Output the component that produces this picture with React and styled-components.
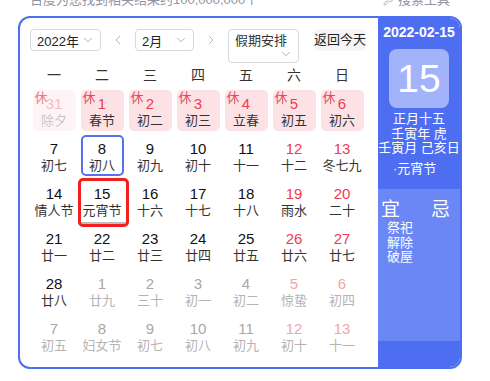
import React from 'react';
import styled, { createGlobalStyle } from 'styled-components';
import { ChevronDown, ChevronLeft, ChevronRight, Wrench } from 'lucide-react';

const GlobalStyle = createGlobalStyle`
  html, body {
    margin: 0;
    padding: 0;
    background: #ffffff;
    overflow: hidden;
  }
  body {
    font-family: "Liberation Sans", "Noto Sans CJK SC", sans-serif;
    color: #333;
  }
`;

const weekdays = ['一', '二', '三', '四', '五', '六', '日'];

// [day, lunar, flags]  flags: r = weekend red, h = holiday, o = other month, t = today, s = selected
const days = [
  [31, '除夕', 'ho'], [1, '春节', 'h'], [2, '初二', 'h'], [3, '初三', 'h'], [4, '立春', 'h'], [5, '初五', 'h'], [6, '初六', 'h'],
  [7, '初七', ''], [8, '初八', 't'], [9, '初九', ''], [10, '初十', ''], [11, '十一', ''], [12, '十二', 'r'], [13, '冬七九', 'r'],
  [14, '情人节', ''], [15, '元宵节', 's'], [16, '十六', ''], [17, '十七', ''], [18, '十八', ''], [19, '雨水', 'r'], [20, '二十', 'r'],
  [21, '廿一', ''], [22, '廿二', ''], [23, '廿三', ''], [24, '廿四', ''], [25, '廿五', ''], [26, '廿六', 'r'], [27, '廿七', 'r'],
  [28, '廿八', ''], [1, '廿九', 'o'], [2, '三十', 'o'], [3, '初一', 'o'], [4, '初二', 'o'], [5, '惊蛰', 'or'], [6, '初四', 'or'],
  [7, '初五', 'o'], [8, '妇女节', 'o'], [9, '初七', 'o'], [10, '初八', 'o'], [11, '初九', 'o'], [12, '初十', 'or'], [13, '十一', 'or'],
];

function App() {
  return (
    <Page>
      <GlobalStyle />
      <SearchMeta>
        <span>百度为您找到相关结果约100,000,000个</span>
        <Tools>
          <Wrench size={11} strokeWidth={1.6} />
          搜索工具
        </Tools>
      </SearchMeta>

      <Card>
        <Main>
          <Toolbar>
            <Select $width={71}>
              2022年
              <ChevronDown size={14} strokeWidth={1.4} color="#9aa0ac" />
            </Select>
            <Arrow>
              <ChevronLeft size={16} strokeWidth={1.4} />
            </Arrow>
            <Select $width={59}>
              2月
              <ChevronDown size={14} strokeWidth={1.4} color="#9aa0ac" />
            </Select>
            <Arrow>
              <ChevronRight size={16} strokeWidth={1.4} />
            </Arrow>
            <TallSelect>
              <span>假期安排</span>
              <ChevronDown size={14} strokeWidth={1.4} color="#9aa0ac" />
            </TallSelect>
            <TodayButton>返回今天</TodayButton>
          </Toolbar>

          <WeekRow>
            {weekdays.map((w) => (
              <span key={w}>{w}</span>
            ))}
          </WeekRow>

          <Grid>
            {days.map(([d, lunar, f], i) => (
              <Cell
                key={i}
                $holiday={f.includes('h')}
                $other={f.includes('o')}
                $today={f.includes('t')}
                $selected={f.includes('s')}
              >
                {f.includes('h') && <Rest>休</Rest>}
                <DayNum $red={f.includes('r') || f.includes('h')} $other={f.includes('o')}>
                  {d}
                </DayNum>
                <Lunar $other={f.includes('o')}>{lunar}</Lunar>
              </Cell>
            ))}
          </Grid>
        </Main>

        <Side>
          <SideTop>
            <DateLine>2022-02-15</DateLine>
            <BigDay>15</BigDay>
            <LunarInfo>
              <div>正月十五</div>
              <div>壬寅年 虎</div>
              <div>壬寅月 己亥日</div>
            </LunarInfo>
            <Festival>·元宵节</Festival>
          </SideTop>
          <SideMiddle>
            <AlmanacHead>
              <span>宜</span>
              <span>忌</span>
            </AlmanacHead>
            <AlmanacList>
              <div>祭祀</div>
              <div>解除</div>
              <div>破屋</div>
            </AlmanacList>
          </SideMiddle>
          <SideBottom />
        </Side>
      </Card>
    </Page>
  );
}

const Page = styled.div`
  width: 490px;
  height: 381px;
`;

const SearchMeta = styled.div`
  display: flex;
  justify-content: space-between;
  margin-top: -9px;
  padding: 0 40px 0 30px;
  font-size: 13px;
  line-height: 18px;
  color: #9195a3;
`;

const Tools = styled.span`
  display: flex;
  align-items: center;
  gap: 4px;
`;

const Card = styled.div`
  margin: 7px 0 0 18px;
  width: 444px;
  height: 353px;
  box-sizing: border-box;
  border: 2px solid #4e6ef2;
  border-radius: 12px;
  overflow: hidden;
  display: flex;
`;

const Main = styled.div`
  width: 358px;
  flex-shrink: 0;
  box-sizing: border-box;
  padding: 11px 12px 0 10px;
`;

const Toolbar = styled.div`
  display: flex;
  align-items: flex-start;
  height: 34px;
  & > * {
    flex-shrink: 0;
  }
`;

const Select = styled.div`
  width: ${(p) => p.$width}px;
  height: 22px;
  box-sizing: border-box;
  border: 1px solid #d7d9e0;
  border-radius: 4px;
  display: flex;
  align-items: center;
  justify-content: space-between;
  padding: 0 5px 0 6px;
  font-size: 13px;
  white-space: nowrap;
  color: #222;
`;

const Arrow = styled.div`
  width: 34px;
  height: 22px;
  display: flex;
  align-items: center;
  justify-content: center;
  color: #aab0bb;
`;

const TallSelect = styled.div`
  width: 71px;
  height: 34px;
  box-sizing: border-box;
  border: 1px solid #d7d9e0;
  border-radius: 4px;
  display: flex;
  flex-direction: column;
  padding: 2px 5px 0 6px;
  font-size: 13px;
  line-height: 18px;
  white-space: nowrap;
  color: #333;
  svg {
    align-self: flex-end;
    margin-top: -3px;
  }
`;

const TodayButton = styled.div`
  margin-left: 15px;
  width: 52px;
  height: 22px;
  border-radius: 6px;
  background: #f5f5f6;
  font-size: 13px;
  line-height: 22px;
  text-align: center;
  color: #222;
  white-space: nowrap;
`;

const WeekRow = styled.div`
  display: grid;
  grid-template-columns: repeat(7, 48px);
  margin-top: 4px;
  height: 16px;
  font-size: 14px;
  line-height: 16px;
  text-align: center;
  color: #333;
`;

const Grid = styled.div`
  display: grid;
  grid-template-columns: repeat(7, 48px);
  grid-auto-rows: 41px;
  row-gap: 4px;
  margin-top: 7px;
  justify-items: center;
`;

const Cell = styled.div`
  position: relative;
  width: 43px;
  height: 41px;
  box-sizing: border-box;
  border-radius: 5px;
  display: flex;
  flex-direction: column;
  align-items: center;
  padding-top: 3px;
  background: ${(p) => (p.$holiday ? (p.$other ? '#fef1f2' : '#fde2e5') : 'transparent')};
  border: 2px solid ${(p) => (p.$today ? '#5472ef' : 'transparent')};
  opacity: ${(p) => (p.$holiday && p.$other ? 0.75 : 1)};
  ${(p) =>
    p.$selected &&
    `
    &::after {
      content: '';
      position: absolute;
      left: -5px;
      top: -4px;
      right: -7px;
      bottom: -8px;
      border: 3px solid #f31e1e;
      border-radius: 5px;
      box-shadow: inset 0 -3px 0 -1px #bdbdbd;
    }
  `}
`;

const Rest = styled.span`
  position: absolute;
  left: 0px;
  top: -2px;
  font-size: 13px;
  line-height: 16px;
  color: #f0445a;
`;

const DayNum = styled.div`
  font-size: 15px;
  line-height: 18px;
  color: ${(p) => {
    if (p.$other) return p.$red ? '#f4a3ad' : '#a8a8a8';
    return p.$red ? '#ef3b50' : '#111';
  }};
`;

const Lunar = styled.div`
  font-size: 13px;
  line-height: 16px;
  white-space: nowrap;
  color: ${(p) => (p.$other ? '#b4b4b4' : '#333')};
`;

const Side = styled.div`
  flex: 1;
  display: flex;
  flex-direction: column;
  color: #fff;
`;

const SideTop = styled.div`
  height: 171px;
  background: #4e6ef2;
  display: flex;
  flex-direction: column;
  align-items: center;
  padding-top: 6px;
  box-sizing: border-box;
`;

const DateLine = styled.div`
  font-size: 14px;
  font-weight: bold;
  line-height: 16px;
`;

const BigDay = styled.div`
  margin-top: 9px;
  width: 60px;
  height: 59px;
  border-radius: 8px;
  background: #a3b3f9;
  font-size: 39px;
  line-height: 59px;
  text-align: center;
`;

const LunarInfo = styled.div`
  margin-top: 4px;
  font-size: 13px;
  line-height: 14.5px;
  text-align: center;
  white-space: nowrap;
`;

const Festival = styled.div`
  align-self: flex-start;
  margin: 6px 0 0 15px;
  font-size: 13px;
  line-height: 14px;
`;

const SideMiddle = styled.div`
  flex: 1;
  background: #6b87f5;
  padding: 10px 0 0 3px;
`;

const AlmanacHead = styled.div`
  display: flex;
  gap: 31px;
  font-size: 19px;
  line-height: 22px;
`;

const AlmanacList = styled.div`
  padding-left: 6px;
  font-size: 13px;
  line-height: 14.5px;
  white-space: nowrap;
`;

const SideBottom = styled.div`
  height: 26px;
  background: #4e6ef2;
`;

export default App;
